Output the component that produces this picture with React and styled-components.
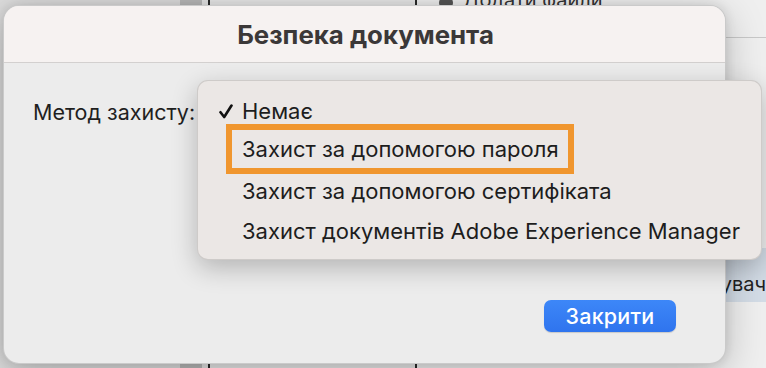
import styled, { createGlobalStyle } from "styled-components";

const GlobalStyle = createGlobalStyle`
  html, body {
    margin: 0;
    padding: 0;
  }
  body {
    font-family: Inter, "Noto Sans", "Liberation Sans", sans-serif;
    -webkit-font-smoothing: antialiased;
  }
`;

const Screen = styled.div`
  position: relative;
  width: 766px;
  height: 368px;
  overflow: hidden;
  background: #e2e2e2;
`;

/* app window behind the sheet */
const Backdrop = styled.div`
  display: flex;
  height: 100%;
`;

const Pane = styled.div`
  width: ${(p) => p.$w}px;
  flex: ${(p) => (p.$w ? "none" : "1")};
  background: ${(p) => p.$bg};
  border-right: ${(p) => (p.$divider ? "2px solid #2a2a2a" : "none")};
  display: flex;
  flex-direction: column;
`;

const Toolbar = styled.div`
  height: 38px;
  border-bottom: 1px solid #c8c8c8;
  display: flex;
  align-items: flex-start;
  gap: 10px;
  padding-left: 22px;
  box-sizing: border-box;
`;

const ToolIcon = styled.span`
  width: 14px;
  height: 14px;
  margin-top: -4px;
  border-radius: 50%;
  background: #555;
`;

const ToolText = styled.span`
  font-size: 20px;
  color: #333;
  margin-top: -12px;
`;

const Spacer = styled.div`
  flex: 1;
`;

const UserBand = styled.div`
  height: 54px;
  margin-bottom: 66px;
  background: #d3dce6;
  display: flex;
  justify-content: flex-end;
  align-items: flex-end;
  padding-bottom: 6px;
  box-sizing: border-box;
  font-size: 20px;
  color: #222;
`;

const Dialog = styled.div`
  position: absolute;
  left: 3px;
  top: 5px;
  width: 723px;
  height: 359px;
  box-sizing: border-box;
  border-radius: 16px;
  background: #ececec;
  border: 1px solid rgba(0, 0, 0, 0.14);
  box-shadow: 0 10px 40px rgba(0, 0, 0, 0.22), 0 0 12px rgba(0, 0, 0, 0.12);
  display: flex;
  flex-direction: column;
  overflow: hidden;
`;

const Header = styled.div`
  height: 56px;
  flex: none;
  background: #f6f2f1;
  border-bottom: 1px solid #d3d0cf;
  display: flex;
  align-items: center;
  justify-content: center;
`;

const Title = styled.h1`
  margin: 0 0 0 2px;
  font-size: 25.8px;
  font-weight: 700;
  color: #3b3838;
  letter-spacing: 0;
`;

const Body = styled.div`
  flex: 1;
  display: flex;
  flex-direction: column;
  padding: 36px 49px 31px 29px;
`;

const FieldRow = styled.div`
  display: flex;
  align-items: center;
  height: 26px;
`;

const Label = styled.span`
  font-size: 21.5px;
  color: #1f1f1f;
`;

const Footer = styled.div`
  margin-top: auto;
  display: flex;
  justify-content: flex-end;
`;

const PrimaryButton = styled.button`
  width: 132px;
  height: 32px;
  border: none;
  border-radius: 7px;
  background: linear-gradient(#3d87f8, #2f74ee);
  box-shadow: 0 1px 1px rgba(0, 0, 0, 0.15);
  color: #fff;
  font-family: inherit;
  font-size: 21.5px;
  font-weight: 500;
  letter-spacing: 0.2px;
  padding: 0;
`;

const Menu = styled.ul`
  position: absolute;
  left: 197px;
  top: 80px;
  width: 565px;
  height: 180px;
  margin: 0;
  padding: 10px 0;
  box-sizing: border-box;
  list-style: none;
  border-radius: 11px;
  background: #ebe7e5;
  border: 1px solid rgba(0, 0, 0, 0.12);
  box-shadow: 0 8px 26px rgba(0, 0, 0, 0.24);
`;

const MenuItem = styled.li`
  height: 40px;
  display: flex;
  align-items: center;
  padding-left: 44px;
  position: relative;
  font-size: 22px;
  color: #1d1d1d;
`;

const Check = styled.svg`
  position: absolute;
  left: 21px;
  top: 13px;
  width: 14px;
  height: 15px;
`;

const Callout = styled.span`
  display: inline-flex;
  align-items: center;
  height: 50px;
  box-sizing: border-box;
  margin: -4px 0 0 -16px;
  padding: 0 9px 0 10px;
  border: 6px solid #f0962e;
`;

const options = [
  { id: "none", text: "Немає", checked: true },
  { id: "password", text: "Захист за допомогою пароля", marked: true },
  { id: "cert", text: "Захист за допомогою сертифіката" },
  { id: "aem", text: "Захист документів Adobe Experience Manager" },
];

export default function App() {
  return (
    <Screen>
      <GlobalStyle />
      <Backdrop>
        <Pane $w={180} $bg="#dcdcdc" />
        <Pane $w={22} $bg="#b8b8b8" />
        <Pane $w={6} $bg="#e4e4e4" $divider />
        <Pane $w={205} $bg="#e8e8e8" $divider />
        <Pane $bg="#efefef">
          <Toolbar>
            <ToolIcon />
            <ToolText>Додати файли</ToolText>
          </Toolbar>
          <Spacer />
          <UserBand>Користувач</UserBand>
        </Pane>
      </Backdrop>

      <Dialog>
        <Header>
          <Title>Безпека документа</Title>
        </Header>
        <Body>
          <FieldRow>
            <Label>Метод захисту:</Label>
          </FieldRow>
          <Footer>
            <PrimaryButton>Закрити</PrimaryButton>
          </Footer>
        </Body>
      </Dialog>

      <Menu>
        {options.map((o) => (
          <MenuItem key={o.id}>
            {o.checked && (
              <Check viewBox="0 0 14 15">
                <path
                  d="M1.5 8.2 L5.2 13 L12.5 1.5"
                  fill="none"
                  stroke="#111"
                  strokeWidth="2.6"
                  strokeLinecap="round"
                  strokeLinejoin="round"
                />
              </Check>
            )}
            {o.marked ? <Callout>{o.text}</Callout> : o.text}
          </MenuItem>
        ))}
      </Menu>
    </Screen>
  );
}
